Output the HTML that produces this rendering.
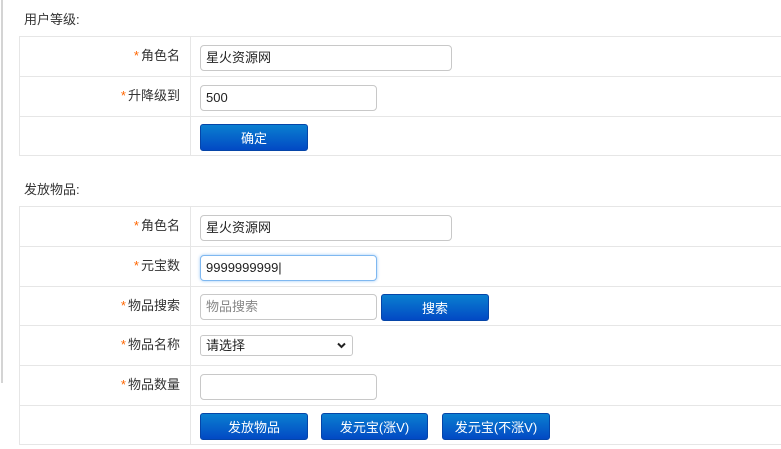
<!DOCTYPE html>
<html><head><meta charset="utf-8"><style>
*{box-sizing:border-box;margin:0;padding:0}
body{width:781px;height:449px;background:#fff;font-family:"Liberation Sans","Noto Sans CJK SC",sans-serif;font-size:13px;color:#333;position:relative;overflow:hidden}
.lb{position:absolute;left:1px;top:0;width:2px;height:383px;background:#d4d4d4}
.h{position:absolute;left:24px;font-size:13px;color:#333}
.t{position:absolute;left:19px;width:770px;border-top:1px solid #e6e6e6;border-left:1px solid #e6e6e6}
.r{position:relative;border-bottom:1px solid #e6e6e6}
.l{position:absolute;left:0;top:0;bottom:0;width:171px;border-right:1px solid #e6e6e6;text-align:right;padding-right:10px;line-height:38px}
.l b{color:#f60;font-weight:normal;margin-right:2px}
.in{position:absolute;border:1px solid #c8c8c8;border-radius:4px;height:26px;padding-left:5px;line-height:24px;font-size:13px;color:#222;background:#fff}
.btn{position:absolute;height:27px;border-radius:3px;background:linear-gradient(#0a7fd0,#0249c4);color:#fff;text-align:center;line-height:27px;font-size:13px;border:1px solid #0545a8}
</style></head><body>
<div class="lb"></div>
<div class="h" style="top:9px">用户等级:</div>
<div class="t" style="top:36px">
 <div class="r" style="height:40px"><div class="l"><b>*</b>角色名</div><div class="in" style="left:180px;top:8px;width:252px">星火资源网</div></div>
 <div class="r" style="height:40px"><div class="l"><b>*</b>升降级到</div><div class="in" style="left:180px;top:8px;width:177px">500</div></div>
 <div class="r" style="height:39px"><div class="l"></div><div class="btn" style="left:180px;top:7px;width:108px">确定</div></div>
</div>
<div class="h" style="top:179px">发放物品:</div>
<div class="t" style="top:206px">
 <div class="r" style="height:40px"><div class="l"><b>*</b>角色名</div><div class="in" style="left:180px;top:8px;width:252px">星火资源网</div></div>
 <div class="r" style="height:40px"><div class="l"><b>*</b>元宝数</div><div class="in" style="left:180px;top:8px;width:177px;border-color:#7fb8f0;box-shadow:0 0 3px #9cc8f5">9999999999|</div></div>
 <div class="r" style="height:39px"><div class="l"><b>*</b>物品搜索</div><div class="in" style="left:180px;top:7px;width:177px;color:#888">物品搜索</div><div class="btn" style="left:361px;top:7px;width:108px">搜索</div></div>
 <div class="r" style="height:40px"><div class="l"><b>*</b>物品名称</div><div class="in" style="left:180px;top:9px;width:153px;height:21px;line-height:19px;border-radius:3px">请选择<svg style="position:absolute;right:6px;top:6px" width="9" height="7" viewBox="0 0 9 7"><path d="M1 1.5L4.5 5L8 1.5" stroke="#222" stroke-width="2" fill="none"/></svg></div></div>
 <div class="r" style="height:40px"><div class="l"><b>*</b>物品数量</div><div class="in" style="left:180px;top:8px;width:177px"></div></div>
 <div class="r" style="height:39px"><div class="l"></div><div class="btn" style="left:180px;top:7px;width:108px">发放物品</div><div class="btn" style="left:301px;top:7px;width:107px">发元宝(涨V)</div><div class="btn" style="left:422px;top:7px;width:108px">发元宝(不涨V)</div></div>
</div>
</body></html>
